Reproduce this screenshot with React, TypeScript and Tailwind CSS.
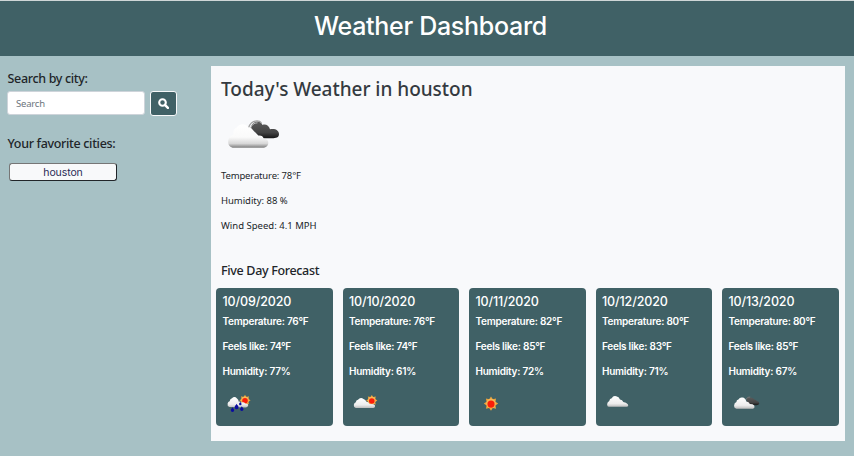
import React from "react";

type Kind = "rain" | "few" | "sun" | "cloud" | "broken";

const days: { date: string; temp: string; feels: string; humidity: string; kind: Kind }[] = [
  { date: "10/09/2020", temp: "76", feels: "74", humidity: "77", kind: "rain" },
  { date: "10/10/2020", temp: "76", feels: "74", humidity: "61", kind: "few" },
  { date: "10/11/2020", temp: "82", feels: "85", humidity: "72", kind: "sun" },
  { date: "10/12/2020", temp: "80", feels: "83", humidity: "71", kind: "cloud" },
  { date: "10/13/2020", temp: "80", feels: "85", humidity: "67", kind: "broken" },
];

function Gradients({ id }: { id: string }) {
  return (
    <defs>
      <linearGradient id={id + "w"} x1="0" y1="0" x2="0" y2="1">
        <stop offset="0" stopColor="#ffffff" />
        <stop offset="0.55" stopColor="#fafafa" />
        <stop offset="0.82" stopColor="#d8d8d8" />
        <stop offset="1" stopColor="#7c7c7c" />
      </linearGradient>
      <linearGradient id={id + "l"} x1="0" y1="0" x2="0" y2="1">
        <stop offset="0" stopColor="#ffffff" />
        <stop offset="0.7" stopColor="#ededed" />
        <stop offset="1" stopColor="#bdbdbd" />
      </linearGradient>
      <linearGradient id={id + "d"} x1="0" y1="0" x2="0" y2="1">
        <stop offset="0" stopColor="#5c5c5c" />
        <stop offset="0.65" stopColor="#444444" />
        <stop offset="1" stopColor="#161616" />
      </linearGradient>
    </defs>
  );
}

function Sun({ cx, cy, r }: { cx: number; cy: number; r: number }) {
  const points = Array.from({ length: 16 }, (_, i) => {
    const a = (i * Math.PI) / 8;
    const d = i % 2 === 0 ? r : r * 0.66;
    return `${cx + d * Math.sin(a)},${cy - d * Math.cos(a)}`;
  }).join(" ");
  return (
    <g>
      <polygon points={points} fill="#eda43c" />
      <circle cx={cx} cy={cy} r={r * 0.66} fill="#f8b858" />
      <circle cx={cx} cy={cy + 0.5} r={r * 0.5} fill="#fb1d08" />
    </g>
  );
}

function DayIcon({ kind }: { kind: Kind }) {
  const drop = "M0 -2.4 C0.5 -1.2 1.7 -0.4 1.7 0.6 A1.7 1.7 0 0 1 -1.7 0.6 C-1.7 -0.4 -0.5 -1.2 0 -2.4Z";
  return (
    <svg width="36" height="24" viewBox="0 0 36 24" className="block">
      <Gradients id={kind} />
      {kind === "rain" && (
        <>
          <Sun cx={22} cy={9.3} r={5.6} />
          <path d="M6.4 16 Q4 14.8 4.6 12.4 Q5 10.6 6.6 10.2 Q7 7.6 9 7.2 Q11.5 4.800 14 7.4 Q15.4 8.4 15.800 10.8 Q17 10.2 18.300 11.600 Q21 10.600 22.200 12.400 Q25.400 12.400 25.200 14.600 Q24.600 16.400 22.600 16.500Z" fill="url(#rainl)" />
          <g fill="#0a0ca0">
            <path d={drop} transform="translate(9.5 18.6)" />
            <path d={drop} transform="translate(13.6 15.6) scale(1.15)" />
            <path d={drop} transform="translate(17.3 12.6) scale(0.75)" />
            <path d={drop} transform="translate(18.8 17.6)" />
          </g>
        </>
      )}
      {kind === "few" && (
        <>
          <Sun cx={22.8} cy={9.5} r={5.6} />
          <path d="M6.800 17 Q4.600 16.600 4.800 14 Q5 12 6.800 11.300 Q7 9.200 9 8.800 Q11.500 5.600 14.500 8 Q16.500 8.600 17.500 10.800 Q19.600 10.800 20.500 13 L24.500 13.200 Q26.500 14 26 15.800 Q25.500 17 24 17Z" fill="url(#fewl)" />
        </>
      )}
      {kind === "sun" && <Sun cx={15} cy={12.6} r={7.2} />}
      {kind === "cloud" && (
        <path d="M6.800 15.800 Q5.200 15.800 5.100 13.500 Q5.100 11 7.200 10 Q7.700 7.500 9.700 7.200 Q11.200 4.500 14.200 5.300 Q17 5.700 18 8.400 Q20.400 8.400 21.300 10.900 Q24.200 11.300 25.800 13.200 Q27 15.300 24.700 15.800Z" fill="url(#cloudl)" />
      )}
      {kind === "broken" && (
        <>
          <path d="M17.5 8 Q19.500 5.300 22 6.700 Q24 6.300 25.300 8.500 Q27 8.300 27.800 10.100 Q30.300 10.500 30.300 12.500 Q29.800 14.300 27.500 14.300 L21 14.100 Q18.500 13 17.500 8Z" fill="url(#brokend)" />
          <path d="M17 8.5 Q18.300 5.500 21.200 6" fill="none" stroke="#777" strokeWidth="1" />
          <path d="M7.500 17.700 Q5 17.300 5.100 14.500 Q5.200 11.800 7.400 11.100 Q7.400 8.900 9.400 8.500 Q10.800 6 13.500 6.500 Q16.400 6.800 17.300 10.500 Q20 10.700 20.900 13.100 Q24 13.100 25.200 14.500 Q26.100 17.300 23.900 17.700Z" fill="url(#brokenl)" />
        </>
      )}
    </svg>
  );
}

function TodayIcon() {
  return (
    <svg width="60" height="36" viewBox="0 0 60 36" className="block">
      <Gradients id="today" />
      <path d="M29.500 11.500 C31 8 33 5.800 36.500 5.600 Q40 5.800 41.500 9 C44.500 7.800 48 9.500 49 13.200 C54.500 12.200 58 14.500 58 18 C58 21.500 55 22.300 51 22.300 L40 22.300Z" fill="url(#todayd)" />
      <path d="M27.500 12 C28.800 7.800 31.500 5 36 4.900 Q39 5 40.500 6.800" fill="none" stroke="#a2a2a2" strokeWidth="1.200" />
      <path d="M29.500 12.500 C30.500 9 33 6.800 36.500 6.800" fill="none" stroke="#d4d4d4" strokeWidth="0.8" />
      <path d="M13 31.800 C9 31.500 7 29 7.200 25.500 C7.300 22 9.300 19.300 12.500 18.600 C11.800 14.500 13.500 12.200 15.800 11.500 C17.500 7.800 24.500 6.500 27.300 11.300 C30.500 11.500 32.300 14 32.500 18 Q35 17.200 36.300 20 C38.500 18.700 42.200 19.400 42.800 22.800 C45.800 22.800 47.300 24.500 47.300 26.700 C47.500 29.500 45 31.800 41.500 31.800Z" fill="url(#todayw)" />
    </svg>
  );
}

export default function App() {
  return (
    <div className="h-[456px] w-[854px] overflow-hidden bg-[#a7c1c5] font-['Inter',sans-serif] text-[#212529]">
      <header className="flex h-14 justify-center border-t border-[#cfd6d7] bg-[#406166] pt-[9px] pl-[7px]">
        <h1 className="text-[25px] leading-8 font-medium tracking-[-0.29px] whitespace-nowrap text-white">Weather Dashboard</h1>
      </header>
      <div className="flex">
        <aside className="w-[211px] shrink-0 pt-[14px] pl-2 font-['Noto_Sans',sans-serif]">
          <h2 className="-ml-[0.5px] text-[12.5px] leading-[18px] font-medium tracking-[-0.33px]">Search by city:</h2>
          <div className="mt-[3px] flex gap-[5px]">
            <input
              placeholder="Search"
              className="-ml-px h-[24px] w-[138px] rounded-[3px] border border-[#ced4da] bg-white px-2 text-[9.5px] tracking-[-0.2px] placeholder:text-[#6c757d]"
            />
            <button aria-label="Search" className="flex h-[25px] w-[27px] items-center justify-center rounded-[3px] border border-[#f8f9fa] bg-[#406166]">
              <svg width="11" height="11" viewBox="0 0 10 10" fill="none" stroke="#ffffff" className="-mt-px">
                <circle cx="4.1" cy="4.1" r="3" strokeWidth="1.9" />
                <path d="M6.500 6.500 L9 9" strokeWidth="2.200" strokeLinecap="round" />
              </svg>
            </button>
          </div>
          <h2 className="mt-[19px] -ml-[0.5px] text-[12.5px] leading-[18px] font-medium tracking-[-0.33px]">Your favorite cities:</h2>
          <button className="mt-[10px] ml-px block h-[18px] w-[108px] rounded-[3px] border border-t-[#767676] border-r-[#212529] border-b-[#212529] border-l-[#767676] bg-[#f8f9fa] font-['Inter',sans-serif] text-[10.5px] leading-4 tracking-[-0.1px] text-[#292a55]">
            <span className="relative top-px">houston</span>
          </button>
        </aside>
        <main className="mt-[10px] h-[375px] w-[634px] bg-[#f8f9fb]">
          <section className="h-[222px] px-[10px] pt-[9px] font-['Noto_Sans',sans-serif]">
            <h2 className="text-[19px] leading-7 font-medium tracking-[-0.03px] whitespace-nowrap text-[#343a40]">Today's Weather in houston</h2>
            <div className="mt-[13px]"><TodayIcon /></div>
            <div className="mt-[11px] text-[9.5px] leading-[25px] text-[#212529]">
              <p className="tracking-[-0.15px]">Temperature: 78°F</p>
              <p className="tracking-[-0.03px]">Humidity: 88 %</p>
              <p className="tracking-[0.01px]">Wind Speed: 4.1 MPH</p>
            </div>
            <h3 className="mt-6 text-[12.5px] leading-[18px] font-medium tracking-[-0.33px]">Five Day Forecast</h3>
          </section>
          <section className="grid grid-cols-5 gap-[10px] pr-[6.500px] pl-[5px]">
            {days.map((d) => (
              <article key={d.date} className="h-[138px] rounded-[4px] bg-[#406166] pt-[6px] pl-[6.5px] text-white">
                <h4 className="text-[12.5px] leading-4 font-medium tracking-[-0.12px]">{d.date}</h4>
                <div className="-mt-px text-[10px] leading-[25px] font-semibold tracking-[-0.24px]">
                  <p>Temperature: {d.temp}°F</p>
                  <p>Feels like: {d.feels}°F</p>
                  <p>Humidity: {d.humidity}%</p>
                </div>
                <div className="mt-[7px]"><DayIcon kind={d.kind} /></div>
              </article>
            ))}
          </section>
        </main>
      </div>
    </div>
  );
}
